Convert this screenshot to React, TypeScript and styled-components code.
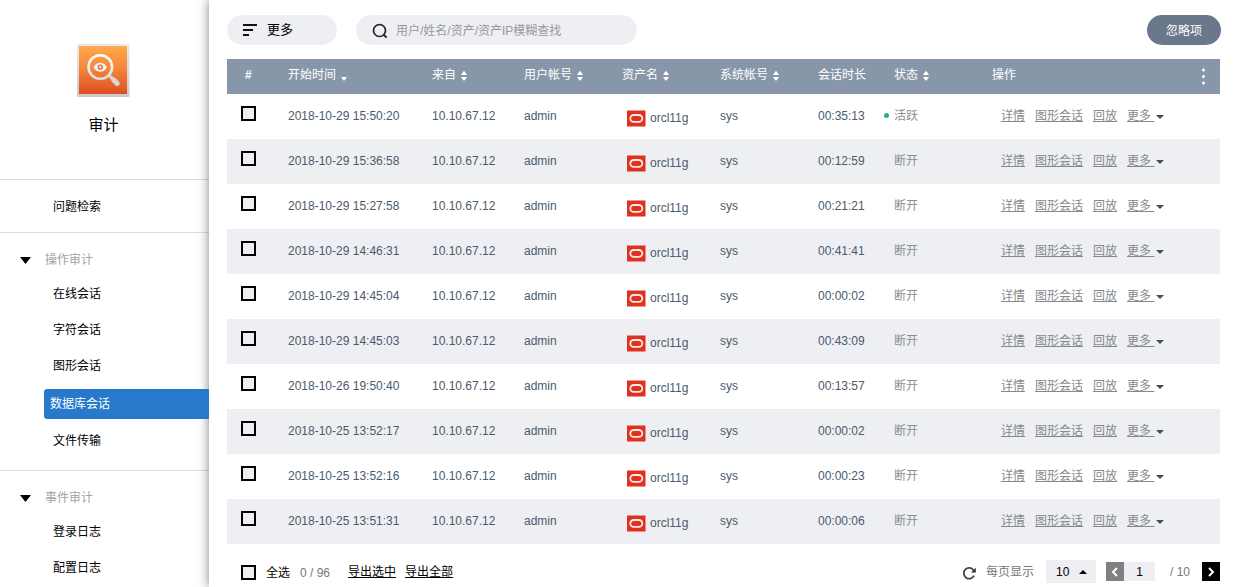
import React from "react";
import styled, { createGlobalStyle } from "styled-components";

const GlobalStyle = createGlobalStyle`
  * { box-sizing: border-box; }
  body {
    margin: 0;
    background: #fff;
    color: #000;
    font: 12px/18px "Liberation Sans", Arial, "Noto Sans CJK SC", sans-serif;
  }
  button, input, select { font: inherit; color: inherit; }
  button { border: 0; padding: 0; cursor: pointer; }
`;

const Page = styled.div`
  display: flex;
  min-height: 100vh;
`;

/* Sidebar */
const Sidebar = styled.aside`
  flex: 0 0 209px;
`;

const Brand = styled.header`
  display: flex;
  flex-direction: column;
  align-items: center;
  gap: 16px;
  height: 180px;
  padding: 44px 2px 0 0;
  border-bottom: 1px solid #dcdfe6;
`;

const BrandName = styled.h1`
  margin: 0;
  font-size: 15px;
  line-height: 24px;
  font-weight: 400;
`;

const NavSection = styled.section<{ $plain?: boolean }>`
  padding: ${(p) => (p.$plain ? "8px 0" : "10px 0 12px")};
  border-bottom: 1px solid #dcdfe6;
  &:last-child { border-bottom: 0; padding-bottom: 0; }
`;

const GroupToggle = styled.button`
  display: flex;
  align-items: center;
  gap: 14px;
  width: 100%;
  height: 32px;
  padding: 2px 0 0 20px;
  background: none;
  color: #a3a3a3;
`;

const NavList = styled.ul`
  margin: 0;
  padding: 0;
  list-style: none;
`;

const NavLink = styled.a<{ $active?: boolean }>`
  position: ${(p) => (p.$active ? "relative" : "static")};
  display: block;
  height: ${(p) => (p.$active ? "30px" : "36px")};
  margin: ${(p) => (p.$active ? "6px 0 3px 44px" : "0")};
  padding-left: ${(p) => (p.$active ? "6px" : "53px")};
  line-height: ${(p) => (p.$active ? "30px" : "38px")};
  border-radius: 3px 0 0 3px;
  background: ${(p) => (p.$active ? "#2779cb" : "transparent")};
  color: ${(p) => (p.$active ? "#fff" : "#000")};
  text-decoration: none;
`;

/* Main panel */
const Main = styled.main`
  flex: 1;
  min-width: 0;
  padding: 15px 15px 0 18px;
  box-shadow: 0 0 10px rgba(0, 0, 0, 0.5);
`;

const Toolbar = styled.div`
  display: flex;
  align-items: center;
  gap: 19px;
  margin: 0 -1px 14px 0;
`;

const MoreButton = styled.button`
  display: flex;
  align-items: center;
  gap: 10px;
  width: 110px;
  height: 30px;
  padding-left: 16px;
  border-radius: 15px;
  background: #eeeff3;
  font-size: 13px;
`;

const SearchBox = styled.label`
  display: flex;
  align-items: center;
  gap: 8px;
  width: 281px;
  height: 30px;
  padding: 2px 16px 0;
  border-radius: 15px;
  background: #eeeff3;
`;

const SearchInput = styled.input`
  flex: 1;
  min-width: 0;
  padding: 0;
  border: 0;
  outline: 0;
  background: none;
  &::placeholder { color: #999; opacity: 1; }
`;

const IgnoreButton = styled.button`
  width: 74px;
  height: 30px;
  margin-left: auto;
  padding-top: 2px;
  border-radius: 15px;
  background: #6b778a;
  color: #fff;
`;

/* Table */
const SessionTable = styled.table`
  width: 100%;
  border-collapse: collapse;
  table-layout: fixed;
`;

const Col = styled.col<{ $w?: number }>`
  ${(p) => p.$w && `width: ${p.$w}px;`}
`;

const HeadRow = styled.tr`
  height: 35px;
  background: #8896a9;
  color: #fff;
`;

const HeadCell = styled.th<{ $mark?: boolean }>`
  padding: 0 0 4px ${(p) => (p.$mark ? "18px" : "0")};
  font-weight: ${(p) => (p.$mark ? 700 : 400)};
  text-align: left;
`;

const SortButton = styled.button`
  display: flex;
  align-items: center;
  gap: 4px;
  background: none;
  color: #fff;
`;

const HeadSplit = styled.div`
  display: flex;
  align-items: center;
  justify-content: space-between;
  padding-right: 10px;
`;

const MenuButton = styled.button`
  display: flex;
  padding-top: 4px;
  background: none;
`;

const Row = styled.tr`
  height: 45px;
  color: #4a5a6c;
  &:nth-child(even) { background: #eeeff3; }
`;

const Cell = styled.td<{ $kind?: "check" | "asset" }>`
  padding: ${(p) =>
    p.$kind === "check" ? "0 0 6px 14px" : p.$kind === "asset" ? "2px 0 0 4px" : "0 0 2px"};
`;

const CheckBox = styled.input`
  display: block;
  appearance: none;
  width: 15px;
  height: 15px;
  margin: 0;
  border: 2px solid #000;
  background: #eeeff3;
  &:checked { background: #000; }
`;

const Asset = styled.span`
  display: flex;
  align-items: center;
  gap: 4px;
`;

const Status = styled.span<{ $live: boolean }>`
  display: flex;
  align-items: center;
  gap: 5px;
  margin-left: ${(p) => (p.$live ? "-10px" : "0")};
  color: #8a8f94;
  &::before {
    content: "";
    display: ${(p) => (p.$live ? "block" : "none")};
    width: 5px;
    height: 5px;
    border-radius: 50%;
    background: #1fb28a;
  }
`;

const Actions = styled.div`
  display: flex;
  align-items: center;
  gap: 10px;
  padding-left: 9px;
`;

const ActionLink = styled.a`
  color: #85898d;
  text-decoration: underline;
`;

const ActionMore = styled.button`
  display: flex;
  align-items: center;
  gap: 2px;
  background: none;
  color: #85898d;
  span { text-decoration: underline; white-space: pre; }
  svg { margin-top: 3px; }
`;

/* Footer */
const Footer = styled.footer`
  display: flex;
  align-items: center;
  justify-content: space-between;
  height: 43px;
  padding: 12px 0 0 14px;
`;

const FooterSide = styled.div`
  display: flex;
  align-items: center;
  gap: 10px;
`;

const SelectAll = styled.label`
  display: flex;
  align-items: center;
  gap: 10px;
  padding-top: 2px;
`;

const Muted = styled.span<{ $count?: boolean }>`
  color: #777;
  ${(p) => p.$count && "padding: 2px 8px 0 0;"}
`;

const ExportLink = styled.a`
  color: #000;
  text-decoration: underline;
  & + & { margin-left: -1px; }
`;

const ReloadButton = styled.button`
  display: flex;
  padding-top: 2px;
  background: none;
`;

const SizeField = styled.label`
  display: flex;
  align-items: center;
  gap: 12px;
  color: #777;
`;

const SelectWrap = styled.span`
  display: grid;
  align-items: center;
  width: 50px;
  height: 23px;
  background: #eeeff3;
  color: #000;
  & > * { grid-area: 1 / 1; }
  svg { justify-self: end; margin-right: 9px; pointer-events: none; }
`;

const SizeSelect = styled.select`
  appearance: none;
  width: 100%;
  height: 23px;
  padding: 0 0 0 10px;
  border: 0;
  background: none;
`;

const Pager = styled.nav`
  display: flex;
  align-items: center;
`;

const PageButton = styled.button<{ $muted?: boolean }>`
  display: flex;
  align-items: center;
  justify-content: center;
  width: 18px;
  height: 19px;
  background: ${(p) => (p.$muted ? "#808080" : "#000")};
`;

const PageInput = styled.input`
  width: 31px;
  height: 19px;
  margin-right: 15px;
  padding: 0;
  border: 0;
  background: #eeeff3;
  text-align: center;
`;

const PageTotal = styled.span`
  padding-right: 12px;
  color: #777;
`;

/* Icons */
const AuditLogo = () => (
  <svg width="53" height="53" viewBox="0 0 53 53" aria-hidden="true">
    <defs>
      <linearGradient id="tile" x1="0" y1="0" x2="0" y2="1">
        <stop offset="0" stopColor="#ffaa4c" />
        <stop offset="0.45" stopColor="#f5883c" />
        <stop offset="1" stopColor="#dc4f20" />
      </linearGradient>
      <linearGradient id="frame" x1="0" y1="0" x2="0" y2="1">
        <stop offset="0" stopColor="#e9eaec" />
        <stop offset="1" stopColor="#cbc9cb" />
      </linearGradient>
      <linearGradient id="lens" x1="0" y1="0" x2="0" y2="1">
        <stop offset="0" stopColor="#fff" />
        <stop offset="1" stopColor="#ddd" />
      </linearGradient>
    </defs>
    <rect width="52.500" height="53" rx="1" fill="url(#frame)" />
    <rect x="2" y="2" width="48" height="48" fill="url(#tile)" />
    <path d="M31 32.500l2.200-2.200 2.600 2.400c3 1 5.500 3.800 6.700 5.800 1.200 2.200-1.600 4.600-3.600 3.200-2.200-1.500-4.400-4-5.200-6.600z" fill="#d8d6d6" />
    <circle cx="23.300" cy="23" r="11.800" fill="none" stroke="url(#lens)" strokeWidth="2.600" />
    <path d="M16.500 23.200C20 17.300 26.500 17.300 30 23.200 26.500 29.200 20 29.200 16.500 23.200z" fill="#f3f1f0" />
    <circle cx="23.300" cy="23.200" r="2.700" fill="#ee7433" />
    <circle cx="23.300" cy="23.200" r="1.100" fill="#fff" />
  </svg>
);

const Triangle = ({ w, h, up, color }: { w: number; h: number; up?: boolean; color: string }) => (
  <svg width={w} height={h} viewBox={`0 0 ${w} ${h}`} aria-hidden="true">
    <path d={up ? `M0 ${h}H${w}L${w / 2} 0z` : `M0 0H${w}L${w / 2} ${h}z`} fill={color} />
  </svg>
);

const SortIcon = ({ down }: { down?: boolean }) => (
  <svg width="8" height="14" viewBox="0 0 8 14" aria-hidden="true">
    {!down && <path d="M1 7h6L4.500 3.200h-1z" fill="#fff" />}
    <path d="M1 9h6L4.500 12.600h-1z" fill="#fff" />
  </svg>
);

const FilterIcon = () => (
  <svg width="14" height="12" viewBox="0 0 14 12" aria-hidden="true">
    <path d="M0 1h14M0 6h10M0 11h6" stroke="#111" strokeWidth="2" />
  </svg>
);

const SearchIcon = () => (
  <svg width="16" height="16" viewBox="0 0 16 16" fill="none" stroke="#222" aria-hidden="true">
    <circle cx="7.500" cy="7.500" r="6" strokeWidth="1.700" />
    <path d="M11.600 11.600l3 3" strokeWidth="2" />
  </svg>
);

const DotsIcon = () => (
  <svg width="13" height="18" viewBox="0 0 13 18" fill="#fff" aria-hidden="true">
    <circle cx="6.500" cy="2" r="1.500" />
    <circle cx="6.500" cy="8.500" r="1.500" />
    <circle cx="6.500" cy="15" r="1.500" />
  </svg>
);

const OracleIcon = () => (
  <svg width="20" height="18" viewBox="0 0 20 18" aria-hidden="true">
    <rect x="1" y="1.500" width="18.500" height="16" fill="#e0301e" />
    <rect x="4.300" y="6" width="12" height="6.800" rx="3.400" fill="none" stroke="#fbe9e6" strokeWidth="1.800" />
  </svg>
);

const ReloadIcon = () => (
  <svg width="14" height="14" viewBox="0 0 14 14" aria-hidden="true">
    <path d="M12 9.700A5.400 5.400 0 1 1 11.600 4.200" fill="none" stroke="#444" strokeWidth="1.800" />
    <path d="M13.800 1.800v4.800H9z" fill="#333" />
  </svg>
);

const Chevron = ({ left }: { left?: boolean }) => (
  <svg width="8" height="10" viewBox="0 0 8 10" fill="none" stroke="#fff" strokeWidth="2" aria-hidden="true">
    <path d={left ? "M6 1L2 5l4 4" : "M2 1l4 4-4 4"} />
  </svg>
);

const sections = [
  { title: "操作审计", items: ["在线会话", "字符会话", "图形会话", "数据库会话", "文件传输"] },
  { title: "事件审计", items: ["登录日志", "配置日志"] },
];

const columns = [
  { title: "开始时间", width: 144, sort: "down" },
  { title: "来自", width: 92, sort: "both" },
  { title: "用户帐号", width: 98, sort: "both" },
  { title: "资产名", width: 98, sort: "both" },
  { title: "系统帐号", width: 98, sort: "both" },
  { title: "会话时长", width: 76 },
  { title: "状态", width: 98, sort: "both" },
];

const sessions = [
  ["2018-10-29 15:50:20", "00:35:13", "活跃"],
  ["2018-10-29 15:36:58", "00:12:59", "断开"],
  ["2018-10-29 15:27:58", "00:21:21", "断开"],
  ["2018-10-29 14:46:31", "00:41:41", "断开"],
  ["2018-10-29 14:45:04", "00:00:02", "断开"],
  ["2018-10-29 14:45:03", "00:43:09", "断开"],
  ["2018-10-26 19:50:40", "00:13:57", "断开"],
  ["2018-10-25 13:52:17", "00:00:02", "断开"],
  ["2018-10-25 13:52:16", "00:00:23", "断开"],
  ["2018-10-25 13:51:31", "00:00:06", "断开"],
];

export default function App() {
  return (
    <>
      <GlobalStyle />
      <Page>
        <Sidebar>
          <Brand>
            <AuditLogo />
            <BrandName>审计</BrandName>
          </Brand>
          <NavSection $plain>
            <NavLink href="#">问题检索</NavLink>
          </NavSection>
          {sections.map((section) => (
            <NavSection key={section.title}>
              <GroupToggle type="button" aria-expanded="true">
                <Triangle w={11} h={7} color="#000" />
                {section.title}
              </GroupToggle>
              <NavList>
                {section.items.map((item) => (
                  <li key={item}>
                    <NavLink href="#" $active={item === "数据库会话"}>{item}</NavLink>
                  </li>
                ))}
              </NavList>
            </NavSection>
          ))}
        </Sidebar>

        <Main>
          <Toolbar>
            <MoreButton type="button"><FilterIcon />更多</MoreButton>
            <SearchBox>
              <SearchIcon />
              <SearchInput type="text" aria-label="查找" placeholder="用户/姓名/资产/资产IP模糊查找" />
            </SearchBox>
            <IgnoreButton type="button">忽略项</IgnoreButton>
          </Toolbar>

          <SessionTable>
            <colgroup>
              <Col $w={61} />
              {columns.map((c) => <Col key={c.title} $w={c.width} />)}
              <Col />
            </colgroup>
            <thead>
              <HeadRow>
                <HeadCell $mark>#</HeadCell>
                {columns.map((c) => (
                  <HeadCell key={c.title}>
                    {c.sort ? (
                      <SortButton type="button">
                        {c.title}
                        <SortIcon down={c.sort === "down"} />
                      </SortButton>
                    ) : c.title}
                  </HeadCell>
                ))}
                <HeadCell>
                  <HeadSplit>
                    操作
                    <MenuButton type="button" aria-label="列设置"><DotsIcon /></MenuButton>
                  </HeadSplit>
                </HeadCell>
              </HeadRow>
            </thead>
            <tbody>
              {sessions.map(([start, length, status]) => (
                <Row key={start}>
                  <Cell $kind="check"><CheckBox type="checkbox" aria-label={start} /></Cell>
                  <Cell>{start}</Cell>
                  <Cell>10.10.67.12</Cell>
                  <Cell>admin</Cell>
                  <Cell $kind="asset"><Asset><OracleIcon />orcl11g</Asset></Cell>
                  <Cell>sys</Cell>
                  <Cell>{length}</Cell>
                  <Cell><Status $live={status === "活跃"}>{status}</Status></Cell>
                  <Cell>
                    <Actions>
                      <ActionLink href="#">详情</ActionLink>
                      <ActionLink href="#">图形会话</ActionLink>
                      <ActionLink href="#">回放</ActionLink>
                      <ActionMore type="button">
                        <span>更多 </span>
                        <Triangle w={8} h={4} color="#3f4f63" />
                      </ActionMore>
                    </Actions>
                  </Cell>
                </Row>
              ))}
            </tbody>
          </SessionTable>

          <Footer>
            <FooterSide>
              <SelectAll><CheckBox type="checkbox" />全选</SelectAll>
              <Muted $count>0 / 96</Muted>
              <ExportLink href="#">导出选中</ExportLink>
              <ExportLink href="#">导出全部</ExportLink>
            </FooterSide>
            <FooterSide>
              <ReloadButton type="button" aria-label="刷新"><ReloadIcon /></ReloadButton>
              <SizeField>
                每页显示
                <SelectWrap>
                  <SizeSelect defaultValue="10">
                    <option>10</option>
                    <option>20</option>
                    <option>50</option>
                  </SizeSelect>
                  <Triangle w={8} h={4} up color="#000" />
                </SelectWrap>
              </SizeField>
              <Pager aria-label="分页">
                <PageButton type="button" $muted aria-label="上一页"><Chevron left /></PageButton>
                <PageInput type="text" aria-label="页码" defaultValue="1" />
                <PageTotal>/ 10</PageTotal>
                <PageButton type="button" aria-label="下一页"><Chevron /></PageButton>
              </Pager>
            </FooterSide>
          </Footer>
        </Main>
      </Page>
    </>
  );
}
